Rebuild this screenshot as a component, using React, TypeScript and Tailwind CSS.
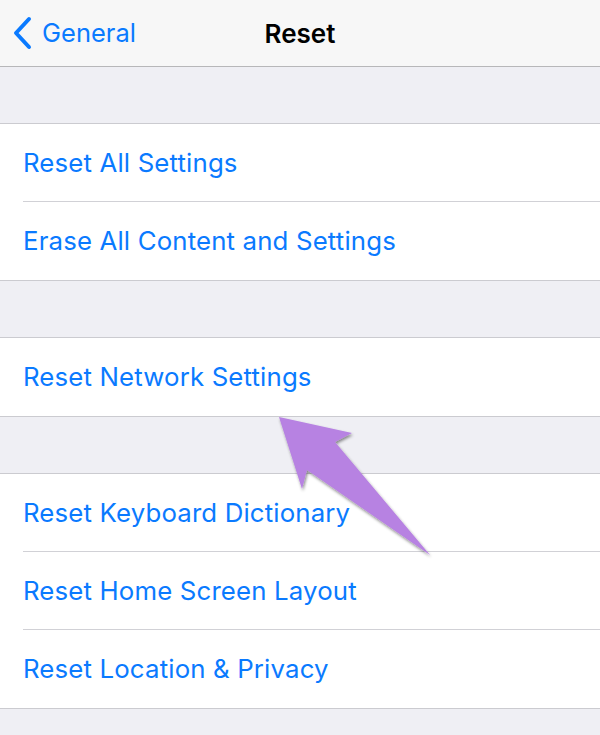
import React from "react";

const font = { fontFamily: "Inter, 'Liberation Sans', sans-serif" };

function Row({ label, last }: { label: string; last?: boolean }) {
  return (
    <div className="relative h-[78px] flex items-center pl-[23px] bg-white">
      <span className="text-[25.8px] text-[#0a7aff] tracking-[0.15px]">{label}</span>
      {!last && <div className="absolute bottom-0 left-[23px] right-0 h-px bg-[#d1d1d6]" />}
    </div>
  );
}

function Group({ items }: { items: string[] }) {
  return (
    <div className="border-y border-[#cbcbd0] bg-white">
      {items.map((t, i) => (
        <Row key={t} label={t} last={i === items.length - 1} />
      ))}
    </div>
  );
}

export default function App() {
  return (
    <div className="relative w-[600px] h-[735px] bg-[#efeff4] overflow-hidden" style={font}>
      <div className="h-[67px] bg-[#f7f7f7] border-b border-[#b7b7b9] flex items-center relative">
        <div className="flex items-center pl-[12px] gap-[8px]">
          <svg width="22" height="34" viewBox="0 0 22 34">
            <path d="M17 3 L4 17 L17 31" fill="none" stroke="#0a7aff" strokeWidth="4" strokeLinecap="round" strokeLinejoin="round" />
          </svg>
          <span className="text-[25.5px] text-[#0a7aff]">General</span>
        </div>
        <div className="absolute left-0 right-0 text-center text-[26px] font-semibold text-black">Reset</div>
      </div>
      <div className="h-[56px]" />
      <Group items={["Reset All Settings", "Erase All Content and Settings"]} />
      <div className="h-[56px]" />
      <Group items={["Reset Network Settings"]} />
      <div className="h-[56px]" />
      <Group items={["Reset Keyboard Dictionary", "Reset Home Screen Layout", "Reset Location & Privacy"]} />
      <svg className="absolute left-0 top-0" width="600" height="735" viewBox="0 0 600 735">
        <defs>
          <filter id="sh" x="-20%" y="-20%" width="140%" height="140%">
            <feDropShadow dx="1" dy="2" stdDeviation="1.5" floodColor="#000" floodOpacity="0.45" />
          </filter>
        </defs>
        <polygon points="279,417 352,433 335,442 430,555 307,470 302,489" fill="#b782e2" filter="url(#sh)" />
      </svg>
    </div>
  );
}
